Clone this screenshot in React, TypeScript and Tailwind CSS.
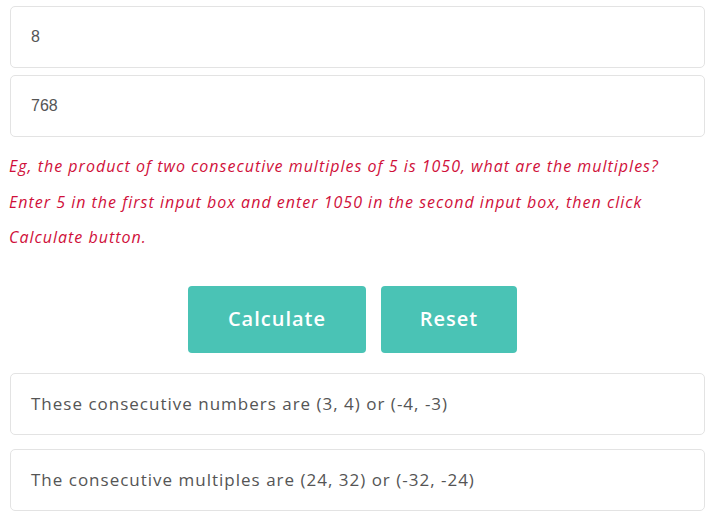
import type { ReactNode } from "react";

const poppins = { fontFamily: '"Open Sans", "Noto Sans", sans-serif' };

function ResultBox({ children }: { children: ReactNode }) {
  return (
    <div className="flex h-[62px] items-center rounded-[5px] border border-[#e3e3e3] px-5 text-[17px] tracking-[1px] text-[#555]">
      {children}
    </div>
  );
}

export default function App() {
  return (
    <div className="min-h-screen bg-white pl-[10px] pr-[5px] pt-[6px]" style={poppins}>
      <div className="flex flex-col gap-[7px]">
        <input
          readOnly
          value="8"
          className="h-[62px] w-full rounded-[5px] border border-[#e3e3e3] px-5 text-[16px] text-[#555] outline-none"
          style={{ fontFamily: '"Liberation Sans", Arial, sans-serif' }}
        />
        <input
          readOnly
          value="768"
          className="h-[62px] w-full rounded-[5px] border border-[#e3e3e3] px-5 text-[16px] text-[#555] outline-none"
          style={{ fontFamily: '"Liberation Sans", Arial, sans-serif' }}
        />
      </div>

      <p className="mt-3 -ml-px text-[16px] italic leading-[35.5px] tracking-[1px] text-[#d0103a]">
        Eg, the product of two consecutive multiples of 5 is 1050, what are the multiples?
        <br />
        Enter 5 in the first input box and enter 1050 in the second input box, then click
        <br />
        Calculate button.
      </p>

      <div className="-ml-[10px] mt-[30px] flex justify-center gap-[15px]">
        <button
          type="button"
          className="h-[67px] w-[178px] rounded-[4px] bg-[#4ac3b5] text-[20px] font-semibold tracking-[1px] text-white"
        >
          Calculate
        </button>
        <button
          type="button"
          className="h-[67px] w-[136px] rounded-[4px] bg-[#4ac3b5] text-[20px] font-semibold tracking-[1px] text-white"
        >
          Reset
        </button>
      </div>

      <div className="mt-5 flex flex-col gap-[14px]">
        <ResultBox>These consecutive numbers are (3, 4) or (-4, -3)</ResultBox>
        <ResultBox>The consecutive multiples are (24, 32) or (-32, -24)</ResultBox>
      </div>
    </div>
  );
}
